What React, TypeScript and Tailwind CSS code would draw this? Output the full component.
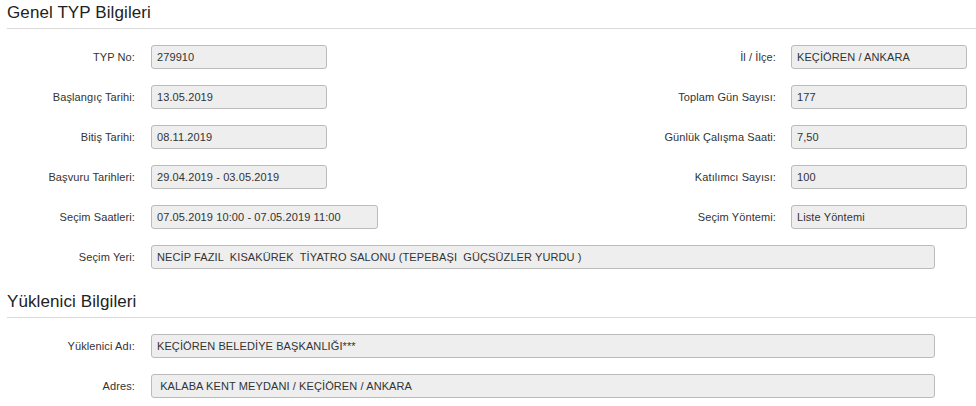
import React from 'react';

type Field = { label: string; value: string; wide?: 'mid' | 'full' };

const leftRight: [Field, Field | null][] = [
  [{ label: 'TYP No:', value: '279910' }, { label: 'İl / İlçe:', value: 'KEÇİÖREN / ANKARA' }],
  [{ label: 'Başlangıç Tarihi:', value: '13.05.2019' }, { label: 'Toplam Gün Sayısı:', value: '177' }],
  [{ label: 'Bitiş Tarihi:', value: '08.11.2019' }, { label: 'Günlük Çalışma Saati:', value: '7,50' }],
  [{ label: 'Başvuru Tarihleri:', value: '29.04.2019 - 03.05.2019' }, { label: 'Katılımcı Sayısı:', value: '100' }],
  [{ label: 'Seçim Saatleri:', value: '07.05.2019 10:00 - 07.05.2019 11:00', wide: 'mid' }, { label: 'Seçim Yöntemi:', value: 'Liste Yöntemi' }],
];

function Box({ value, width }: { value: string; width: string }) {
  return (
    <div
      className={`${width} h-[24px] flex items-center px-[5px] bg-[#eeeeee] border border-[#bbbbbb] rounded-[3px] text-[#333333] whitespace-pre overflow-hidden`}
    >
      {value}
    </div>
  );
}

function Label({ text, className = '' }: { text: string; className?: string }) {
  return <div className={`text-right text-[#333333] whitespace-nowrap ${className}`}>{text}</div>;
}

function Heading({ title }: { title: string }) {
  return (
    <div className="ml-[7px] border-b border-[#d9d9d9] pb-[2px]">
      <h2 className="text-[17px] leading-[26px] text-[#222222]">{title}</h2>
    </div>
  );
}

export default function App() {
  return (
    <div
      className="w-[976px] h-[406px] bg-white overflow-hidden text-[11px] tracking-[0.1px]"
      style={{ fontFamily: '"Liberation Sans", Arial, sans-serif' }}
    >
      <Heading title="Genel TYP Bilgileri" />
      <div className="mt-[16px] flex flex-col gap-[16px]">
        {leftRight.map(([l, r], i) => (
          <div key={i} className="flex items-center">
            <Label text={l.label} className="w-[135px]" />
            <div className="ml-[16px]">
              <Box value={l.value} width={l.wide === 'mid' ? 'w-[227px]' : 'w-[176px]'} />
            </div>
            <div className="flex-1" />
            {r && (
              <>
                <Label text={r.label} />
                <div className="ml-[15px] mr-[9px]">
                  <Box value={r.value} width="w-[176px]" />
                </div>
              </>
            )}
          </div>
        ))}
        <div className="flex items-center">
          <Label text="Seçim Yeri:" className="w-[135px]" />
          <div className="ml-[16px]">
            <Box value="NECİP FAZIL  KISAKÜREK  TİYATRO SALONU (TEPEBAŞI  GÜÇSÜZLER YURDU )" width="w-[784px]" />
          </div>
        </div>
      </div>

      <div className="mt-[20px]">
        <Heading title="Yüklenici Bilgileri" />
      </div>
      <div className="mt-[16px] flex flex-col gap-[16px]">
        <div className="flex items-center">
          <Label text="Yüklenici Adı:" className="w-[135px]" />
          <div className="ml-[16px]">
            <Box value="KEÇİÖREN BELEDİYE BAŞKANLIĞI***" width="w-[784px]" />
          </div>
        </div>
        <div className="flex items-center">
          <Label text="Adres:" className="w-[135px]" />
          <div className="ml-[16px]">
            <Box value=" KALABA KENT MEYDANI / KEÇİÖREN / ANKARA" width="w-[784px]" />
          </div>
        </div>
      </div>
    </div>
  );
}
